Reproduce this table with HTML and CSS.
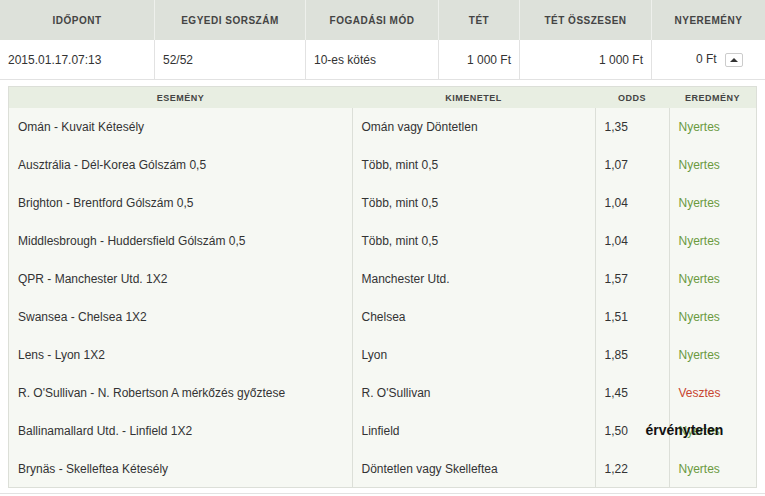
FILE: index.html
```html
<!DOCTYPE html>
<html lang="hu">

<head>
  <meta charset="UTF-8">
  <title>Fogadások</title>
  <link rel="stylesheet" href="styles.css">
</head>

<body>
  <table class="bets">
    <thead>
      <tr>
        <th class="c-time">Időpont</th>
        <th class="c-serial">Egyedi sorszám</th>
        <th class="c-mode">Fogadási mód</th>
        <th class="c-stake">Tét</th>
        <th class="c-total">Tét összesen</th>
        <th class="c-win">Nyeremény</th>
      </tr>
    </thead>
    <tbody>
      <tr class="bet-row">
        <td>2015.01.17.07:13</td>
        <td>52/52</td>
        <td>10-es kötés</td>
        <td class="num">1 000 Ft</td>
        <td class="num">1 000 Ft</td>
        <td class="num win-cell">0 Ft <button class="toggle" type="button"><span class="arrow"></span></button></td>
      </tr>
      <tr class="details-row">
        <td colspan="6">
          <table class="events">
            <thead>
              <tr>
                <th class="e-event">Esemény</th>
                <th class="e-outcome">Kimenetel</th>
                <th class="e-odds">Odds</th>
                <th class="e-result">Eredmény</th>
              </tr>
            </thead>
            <tbody>
              <tr>
                <td>Omán - Kuvait Kétesély</td>
                <td>Omán vagy Döntetlen</td>
                <td>1,35</td>
                <td class="won">Nyertes</td>
              </tr>
              <tr>
                <td>Ausztrália - Dél-Korea Gólszám 0,5</td>
                <td>Több, mint 0,5</td>
                <td>1,07</td>
                <td class="won">Nyertes</td>
              </tr>
              <tr>
                <td>Brighton - Brentford Gólszám 0,5</td>
                <td>Több, mint 0,5</td>
                <td>1,04</td>
                <td class="won">Nyertes</td>
              </tr>
              <tr>
                <td>Middlesbrough - Huddersfield Gólszám 0,5</td>
                <td>Több, mint 0,5</td>
                <td>1,04</td>
                <td class="won">Nyertes</td>
              </tr>
              <tr>
                <td>QPR - Manchester Utd. 1X2</td>
                <td>Manchester Utd.</td>
                <td>1,57</td>
                <td class="won">Nyertes</td>
              </tr>
              <tr>
                <td>Swansea - Chelsea 1X2</td>
                <td>Chelsea</td>
                <td>1,51</td>
                <td class="won">Nyertes</td>
              </tr>
              <tr>
                <td>Lens - Lyon 1X2</td>
                <td>Lyon</td>
                <td>1,85</td>
                <td class="won">Nyertes</td>
              </tr>
              <tr>
                <td>R. O'Sullivan - N. Robertson A mérkőzés győztese</td>
                <td>R. O'Sullivan</td>
                <td>1,45</td>
                <td class="lost">Vesztes</td>
              </tr>
              <tr>
                <td>Ballinamallard Utd. - Linfield 1X2</td>
                <td>Linfield</td>
                <td>1,50</td>
                <td class="won void">Nyertes <span class="void-label">érvénytelen</span></td>
              </tr>
              <tr>
                <td>Brynäs - Skelleftea Kétesély</td>
                <td>Döntetlen vagy Skelleftea</td>
                <td>1,22</td>
                <td class="won">Nyertes</td>
              </tr>
            </tbody>
          </table>
        </td>
      </tr>
    </tbody>
  </table>
</body>

</html>
```

FILE: styles.css
```css
body {
  margin: 0;
  padding: 0;
  background: #fff;
  font-family: "Liberation Sans", Arial, sans-serif;
  font-size: 12px;
  color: #333;
}

table {
  border-collapse: collapse;
}

.bets {
  width: 765px;
  table-layout: fixed;
}

.bets > thead th {
  height: 40px;
  padding: 0;
  background: #dde1da;
  border-right: 1px solid #eef0ec;
  color: #444;
  font-size: 10px;
  font-weight: bold;
  text-transform: uppercase;
  letter-spacing: 0.5px;
  text-align: center;
}

.bets > thead th:last-child {
  border-right: none;
}

.c-time { width: 154px; }
.c-serial { width: 150px; }
.c-mode { width: 132px; }
.c-stake { width: 80px; }
.c-total { width: 131px; }

.bet-row td {
  height: 39px;
  padding: 0 8px;
  border-right: 1px solid #e2e2e2;
  border-bottom: 1px solid #e2e2e2;
  vertical-align: middle;
}

.bet-row td:last-child {
  border-right: none;
}

.num {
  text-align: right;
}

.win-cell {
  white-space: nowrap;
}

.bet-row .win-cell {
  padding-right: 22px;
}

.toggle {
  display: inline-flex;
  align-items: center;
  justify-content: center;
  width: 18px;
  height: 14px;
  margin-left: 5px;
  padding: 0;
  vertical-align: middle;
  background: #fff;
  border: 1px solid #ccc;
  border-radius: 2px;
}

.arrow {
  width: 0;
  height: 0;
  border-left: 4px solid transparent;
  border-right: 4px solid transparent;
  border-bottom: 4px solid #333;
}

.details-row > td {
  padding: 6px 8px 5px 8px;
  border-bottom: 1px solid #e2e2e2;
}

.events {
  width: 749px;
  table-layout: fixed;
  border: 1px solid #dcdfd8;
  background: #f6f8f3;
}

.events th {
  height: 21px;
  padding: 0;
  background: #e8eee2;
  color: #444;
  font-size: 9px;
  font-weight: bold;
  text-transform: uppercase;
  letter-spacing: 0.5px;
  text-align: center;
}

.e-event { width: 343px; }
.e-outcome { width: 243px; }
.e-odds { width: 74px; }

.events td {
  height: 38px;
  padding: 0 9px;
  border-right: 1px solid #dcdfd8;
  vertical-align: middle;
  white-space: nowrap;
}

.events td:last-child {
  border-right: none;
}

.events tr:last-child td {
  height: 37px;
}

.won {
  color: #6b9a3e;
}

.lost {
  color: #c84530;
}

.void {
  position: relative;
}

.void-label {
  position: absolute;
  left: -24px;
  top: 10px;
  color: #111;
  font-size: 14px;
  font-weight: bold;
}
```
